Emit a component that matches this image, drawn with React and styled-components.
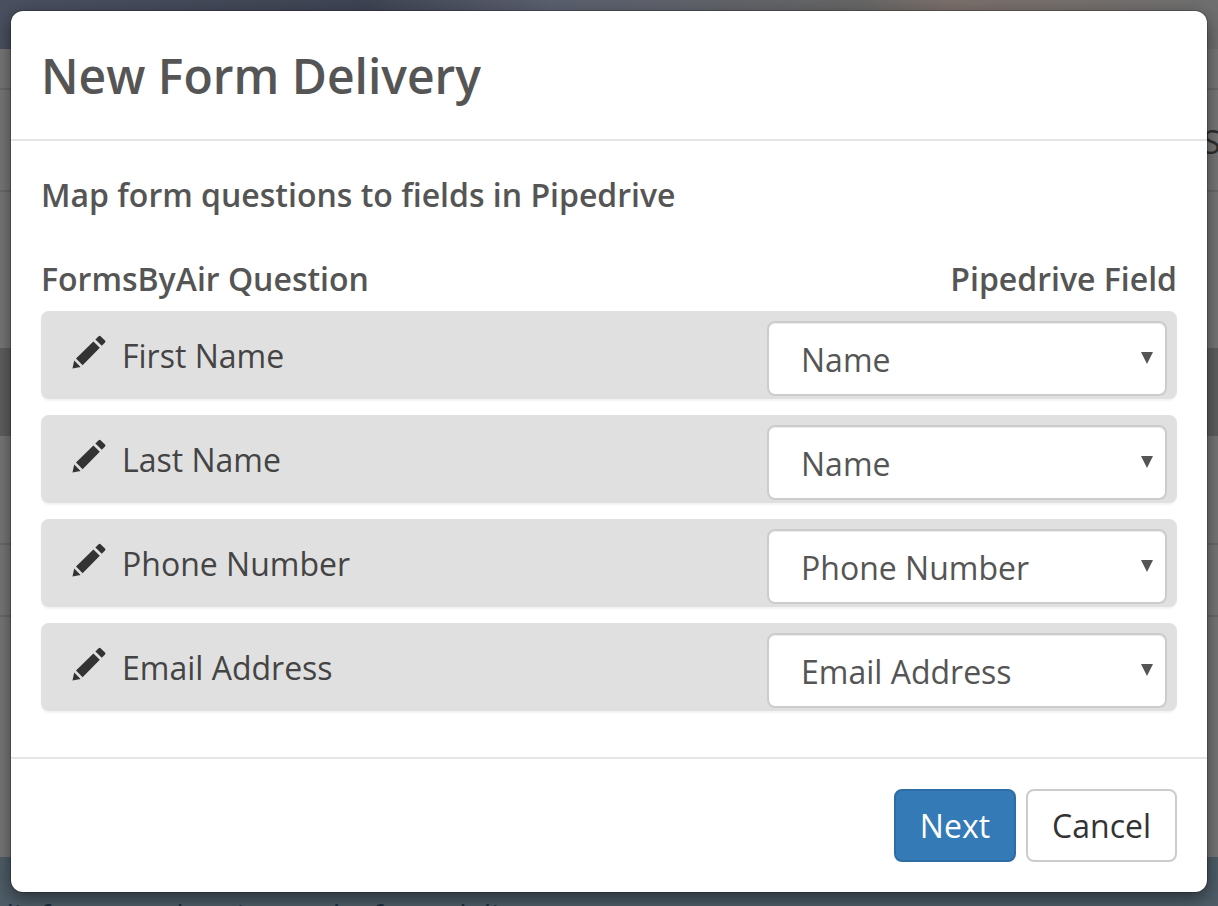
import React from 'react';
import styled, { createGlobalStyle } from 'styled-components';

const GlobalStyle = createGlobalStyle`
  html, body {
    margin: 0;
    padding: 0;
    height: 906px;
    overflow: hidden;
    background: #757575;
    font-family: "Open Sans", "Liberation Sans", sans-serif;
  }
  * { box-sizing: border-box; }
`;

const Page = styled.div`
  position: relative;
  width: 1218px;
  height: 906px;
  overflow: hidden;
  display: flex;
  flex-direction: column;
`;

const TopBar = styled.div`
  height: 49px;
  flex: none;
  background: linear-gradient(90deg, #4a5060 0%, #3f4454 30%, #5b6070 45%, #666 70%, #7a6f6b 78%, #6f6f6f 100%);
`;

const Band = styled.div`
  flex: none;
  height: ${p => p.$h}px;
  background: ${p => p.$bg || '#777'};
  border-bottom: ${p => (p.$line ? '2px solid #6a6a6a' : 'none')};
`;

const BehindText = styled.div`
  flex: 1;
  background: #4e5d68;
  color: #1c2f40;
  font-size: 30px;
  line-height: 30px;
  padding: 43px 0 0 0;
  margin-left: -21px;
  white-space: nowrap;
`;

const BehindLetter = styled.span`
  position: absolute;
  left: 1203px;
  top: 120px;
  font-size: 32px;
  color: #2e2e2e;
`;

const Modal = styled.div`
  position: absolute;
  left: 11px;
  top: 11px;
  width: 1196px;
  height: 881px;
  background: #fff;
  border-radius: 12px;
  box-shadow: 0 0 0 1px rgba(0, 0, 0, 0.2), 0 6px 18px rgba(0, 0, 0, 0.5);
  display: flex;
  flex-direction: column;
`;

const Header = styled.div`
  height: 130px;
  flex: none;
  border-bottom: 2px solid #e5e5e5;
  padding: 32px 30px 0;
`;

const Title = styled.h4`
  margin: 0;
  font-size: 48px;
  line-height: 66px;
  font-weight: 600;
  color: #555;
`;

const Body = styled.div`
  flex: 1;
  padding: 32px 30px 0;
`;

const Subtitle = styled.div`
  font-size: 32px;
  line-height: 44px;
  font-weight: 600;
  color: #555;
`;

const ColumnHeads = styled.div`
  display: flex;
  justify-content: space-between;
  margin-top: 40px;
  font-size: 32px;
  line-height: 44px;
  font-weight: 600;
  color: #555;
`;

const Rows = styled.div`
  display: flex;
  flex-direction: column;
  gap: 16px;
  margin-top: 10px;
`;

const Row = styled.div`
  display: flex;
  justify-content: space-between;
  height: 88px;
  background: #e0e0e0;
  border-radius: 8px;
  box-shadow: 0 2px 2px rgba(0, 0, 0, 0.05);
  padding: 10px 10px 0 31px;
`;

const Question = styled.div`
  display: flex;
  align-items: center;
  gap: 16px;
  height: 44px;
  margin-top: 12px;
  font-size: 32px;
  color: #444;
`;

const Pencil = styled.svg`
  width: 34px;
  height: 34px;
  flex: none;
  margin-top: -6px;
  fill: #333;
`;

const SelectWrap = styled.div`
  position: relative;
  width: 400px;
  height: 75px;
`;

const Select = styled.select`
  appearance: none;
  width: 100%;
  height: 100%;
  padding: 1px 0 0 32px;
  background: #fff;
  border: 2px solid #ccc;
  border-radius: 8px;
  box-shadow: inset 0 1px 1px rgba(0, 0, 0, 0.075);
  font-family: inherit;
  font-size: 32px;
  color: #555;
`;

const Arrow = styled.svg`
  position: absolute;
  right: 14px;
  top: 31px;
  width: 12px;
  height: 12px;
  fill: #555;
`;

const Footer = styled.div`
  height: 135px;
  flex: none;
  border-top: 2px solid #e5e5e5;
  display: flex;
  justify-content: flex-end;
  gap: 10px;
  padding: 30px 30px 0 0;
`;

const Button = styled.button`
  height: 73px;
  padding: 0 24px;
  font-family: inherit;
  font-size: 32px;
  border-radius: 8px;
  border: 2px solid ${p => (p.$primary ? '#2e6da4' : '#ccc')};
  background: ${p => (p.$primary ? '#337ab7' : '#fff')};
  color: ${p => (p.$primary ? '#fff' : '#333')};
`;

const questions = [
  { label: 'First Name', field: 'Name' },
  { label: 'Last Name', field: 'Name' },
  { label: 'Phone Number', field: 'Phone Number' },
  { label: 'Email Address', field: 'Email Address' },
];

const PencilIcon = () => (
  <Pencil viewBox="0 0 34 34">
    <path d="M0.5 33.5 L2.2 25.6 L8.6 32 Z" />
    <path d="M4 23.6 L21.4 6.4 L27.8 12.8 L10.6 30.2 Z" />
    <path d="M23.4 4.4 L26.6 1.2 Q27.6 0.4 28.6 1.2 L33 5.6 Q33.8 6.6 33 7.6 L29.8 10.8 Z" />
  </Pencil>
);

export default function App() {
  return (
    <Page>
      <GlobalStyle />
      <TopBar />
      <Band $h={41} $line />
      <Band $h={102} $line />
      <Band $h={156} />
      <Band $h={88} $bg="#5f5f5f" />
      <Band $h={109} $line />
      <Band $h={72} $line />
      <Band $h={240} />
      <BehindText>Edit forms and assign and a form delivery</BehindText>
      <BehindLetter>S</BehindLetter>

      <Modal>
        <Header>
          <Title>New Form Delivery</Title>
        </Header>
        <Body>
          <Subtitle>Map form questions to fields in Pipedrive</Subtitle>
          <ColumnHeads>
            <span>FormsByAir Question</span>
            <span>Pipedrive Field</span>
          </ColumnHeads>
          <Rows>
            {questions.map(q => (
              <Row key={q.label}>
                <Question>
                  <PencilIcon />
                  {q.label}
                </Question>
                <SelectWrap>
                  <Select defaultValue={q.field}>
                    <option>{q.field}</option>
                  </Select>
                  <Arrow viewBox="0 0 12 12">
                    <path d="M0 0 H12 L6 12 Z" />
                  </Arrow>
                </SelectWrap>
              </Row>
            ))}
          </Rows>
        </Body>
        <Footer>
          <Button $primary>Next</Button>
          <Button>Cancel</Button>
        </Footer>
      </Modal>
    </Page>
  );
}
